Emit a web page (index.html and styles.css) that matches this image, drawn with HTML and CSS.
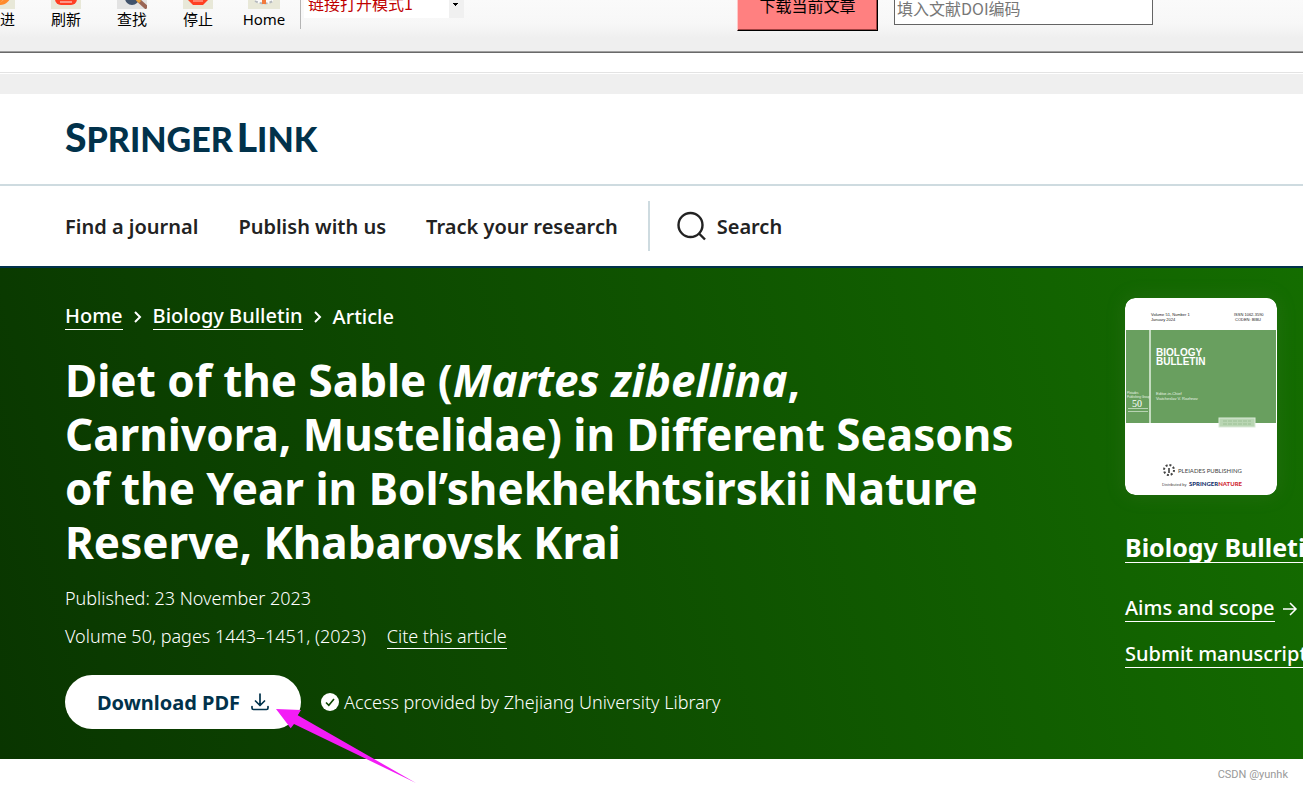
FILE: index.html
```html
<!DOCTYPE html>
<html lang="en">
<head>
    <meta charset="UTF-8">
    <meta name="viewport" content="width=device-width, initial-scale=1.0">
    <title>Diet of the Sable | Biology Bulletin</title>
    <link rel="stylesheet" href="styles.css">
</head>
<body>
    <div class="toolbar" lang="zh-CN">
        <div class="tools">
            <button class="tool">
                <svg width="30" height="30" viewBox="0 0 30 30"><rect width="30" height="30" fill="#e8e8d8"/><circle cx="15" cy="15" r="11" fill="#ff8a2b"/><path d="M9 15h10l-4-5 9 7-9 7 4-5H9z" fill="#ffa85c"/></svg>
                <span>前进</span>
            </button>
            <button class="tool">
                <svg width="30" height="30" viewBox="0 0 30 30"><rect width="30" height="30" fill="#e8e8d8"/><rect x="4" y="4" width="22" height="22" rx="6" fill="#ff3f22"/><path d="M10 20a5 5 0 1 1 10 0M9 23h12" fill="none" stroke="#ffb4a6" stroke-width="1.500"/></svg>
                <span>刷新</span>
            </button>
            <button class="tool">
                <svg width="30" height="30" viewBox="0 0 30 30"><rect width="30" height="30" fill="#e3e3e3"/><circle cx="15" cy="19" r="7" fill="#40526b"/><circle cx="14" cy="17" r="4" fill="#86b4da"/><path d="M20 20l10 9" stroke="#9a6555" stroke-width="4"/><path d="M19 19l4 4" stroke="#e8a33c" stroke-width="3"/></svg>
                <span>查找</span>
            </button>
            <button class="tool">
                <svg width="30" height="30" viewBox="0 0 30 30"><rect width="30" height="30" fill="#e8e8d8"/><path d="M10 4h10l6 6v10l-6 6H10l-6-6V10z" fill="#ff4022"/><path d="M10 22h10" stroke="#ffc2b5"/></svg>
                <span>停止</span>
            </button>
            <button class="tool">
                <svg width="32" height="30" viewBox="0 0 32 30"><rect width="32" height="30" fill="#e8e8d8"/><path d="M7 12h18v11q-9 4-18 0z" fill="#fafafa"/><path d="M7 22q9 5 18 0" fill="none" stroke="#b5b9bd" stroke-width="2" stroke-dasharray="3 2"/><path d="M14 17h4v8h-4z" fill="#f27a3c"/></svg>
                <span>Home</span>
            </button>
        </div>
        <select class="mode" aria-label="链接打开模式">
            <option>链接打开模式1</option>
        </select>
        <button class="fetch">下载当前文章</button>
        <input class="doi" type="text" placeholder="填入文献DOI编码" aria-label="DOI">
    </div>
    <div class="tabstrip"></div>

    <header class="header">
        <a class="logo" href="#"><b>S</b>PRINGER<b class="word">L</b>INK</a>
    </header>
    <nav class="nav">
        <a href="#">Find a journal</a>
        <a href="#">Publish with us</a>
        <a href="#">Track your research</a>
        <a class="search" href="#">
            <svg width="30" height="30" viewBox="0 0 30 30" fill="none" stroke="#222" stroke-width="2.400"><circle cx="13.500" cy="14" r="12"/><path d="M22 22.500l6 6"/></svg>
            Search
        </a>
    </nav>

    <main class="hero">
        <article class="article">
            <div class="crumbs">
                <a href="#">Home</a>
                <svg width="10" height="14" viewBox="0 0 10 14" fill="none" stroke="#fff" stroke-width="2"><path d="M2 2l5 5-5 5"/></svg>
                <a href="#">Biology Bulletin</a>
                <svg width="10" height="14" viewBox="0 0 10 14" fill="none" stroke="#fff" stroke-width="2"><path d="M2 2l5 5-5 5"/></svg>
                <span>Article</span>
            </div>
            <h1>Diet of the Sable (<i>Martes zibellina</i>,<br>Carnivora, Mustelidae) in Different Seasons<br>of the Year in Bol’shekhekhtsirskii Nature<br>Reserve, Khabarovsk Krai</h1>
            <p>Published: 23 November 2023</p>
            <p>Volume 50, pages 1443–1451, (2023) <a class="cite" href="#">Cite this article</a></p>
            <div class="actions">
                <a class="download" href="#">
                    Download PDF
                    <svg width="18" height="18" viewBox="0 0 18 18" fill="none" stroke="#01324b" stroke-width="1.700" stroke-linecap="round" stroke-linejoin="round"><path d="M9 1v11M4.500 8L9 12.500 13.500 8M1 13.500V15q0 1.500 1.500 1.500h13q1.500 0 1.500-1.500v-1.500"/></svg>
                </a>
                <svg class="pointer" width="140" height="74" viewBox="0 0 140 74"><path d="M0 0l25 1-3.300 5.300L140 74 18 15l-3.300 4.300z" fill="#f31cf6"/></svg>
                <span class="access">
                    <svg width="18" height="18" viewBox="0 0 18 18"><circle cx="9" cy="9" r="9" fill="#fff"/><path d="M5 9.500l2.800 2.800L13 6" fill="none" stroke="#0d4500" stroke-width="1.600"/></svg>
                    Access provided by Zhejiang University Library
                </span>
            </div>
        </article>
        <aside class="journal">
            <svg class="cover" width="152" height="197" viewBox="0 0 152 197">
                <rect width="152" height="197" rx="10" fill="#fff"/>
                <path d="M1 32h150v93H1z" fill="#699f5f"/>
                <path d="M25 32v93" stroke="#e4f0e1" stroke-width="1.500"/>
                <g class="cover-small" fill="#222"><text x="26" y="18">Volume 51, Number 1</text><text x="26" y="23">January 2024</text><text x="109" y="18">ISSN 1062-3590</text><text x="110" y="23">CODEN: BIBU</text></g>
                <g class="cover-title" fill="#fff"><text x="31" y="58">BIOLOGY</text><text x="31" y="67">BULLETIN</text></g>
                <g class="cover-small" fill="#e8f3e6"><text x="31" y="97">Editor-in-Chief</text><text x="31" y="102">Viatcheslav V. Rozhnov</text></g>
                <g class="cover-tiny" fill="#e8f3e6"><text x="2" y="96">Pleiades</text><text x="2" y="100">Publishing Group</text></g>
                <text class="cover-fifty" x="7" y="109" fill="#fff">50</text>
                <path d="M3 110.500h20M3 113.500h20" stroke="#b8d3b3"/>
                <rect x="94" y="120" width="36" height="9" fill="#b9d6b3" stroke="#dcebd9"/>
                <path d="M98 123h28M98 126h28" stroke="#9cc095" stroke-dasharray="4 1"/>
                <circle cx="44" cy="172" r="5" fill="none" stroke="#444" stroke-width="2" stroke-dasharray="2 1.900"/>
                <path d="M43 170h2v5h-2z" fill="#666"/>
                <text class="cover-brand" x="53" y="175" fill="#444">PLEIADES PUBLISHING</text>
                <text class="cover-small" x="37" y="188" fill="#444">Distributed by</text>
                <text class="cover-springer" x="64" y="188" fill="#16336e">SPRINGER<tspan fill="#d12a34">NATURE</tspan></text>
            </svg>
            <h2><a href="#">Biology Bulletin</a></h2>
            <div class="journal-link">
                <a href="#">Aims and scope</a>
                <svg width="16" height="16" viewBox="0 0 16 16" fill="none" stroke="#fff" stroke-width="1.500"><path d="M1 8h13M8 2l6 6-6 6"/></svg>
            </div>
            <div class="journal-link"><a href="#">Submit manuscript</a></div>
        </aside>
    </main>
    <footer class="watermark">CSDN @yunhk</footer>
</body>
</html>
```
FILE: styles.css
```css
* {
    box-sizing: border-box;
}

body {
    margin: 0;
    background: #fff;
    color: #222;
    font-family: "Noto Sans", "Noto Sans CJK SC", sans-serif;
    overflow-x: hidden;
}

a {
    color: inherit;
    text-decoration: none;
}

svg {
    flex-shrink: 0;
}

/* browser toolbar */
.toolbar {
    display: flex;
    align-items: flex-end;
    height: 53px;
    padding-bottom: 20px;
    overflow: hidden;
    background: linear-gradient(#fafafa, #f7f7f7 24px, #efefef 38px);
    border-bottom: 1px solid #696969;
    box-shadow: inset 0 -1px #a0a0a0;
}

.tools {
    display: flex;
    align-items: flex-end;
    margin-left: -33px;
    padding-right: 3px;
    margin-bottom: 3px;
    border-right: 1px solid #b4b4b4;
}

.tool {
    display: flex;
    flex-direction: column;
    align-items: center;
    width: 66px;
    padding: 0;
    border: 0;
    background: none;
    font: 15px/20px "Noto Sans", "Noto Sans CJK SC", sans-serif;
    color: #000;
}

.mode {
    appearance: none;
    width: 160px;
    height: 30px;
    margin: 0 0 14px 3px;
    padding: 0 4px;
    border: 0;
    border-radius: 0;
    background:
        linear-gradient(#000, #000) right 6px bottom 14px / 5px 1px no-repeat,
        linear-gradient(#000, #000) right 7px bottom 13px / 3px 1px no-repeat,
        linear-gradient(#000, #000) right 8px bottom 12px / 1px 1px no-repeat,
        linear-gradient(#f0f0f0, #f0f0f0) right / 15px 100% no-repeat,
        #fff;
    color: #c00000;
    font: 16px/30px "Noto Sans CJK SC", sans-serif;
}

.fetch {
    width: 141px;
    height: 48px;
    margin-left: 273px;
    margin-bottom: 1px;
    padding: 0 0 4px;
    border: 1px solid #000;
    border-left-color: #ffc8c8;
    background: #ff8080;
    box-shadow: inset -1px -1px #a04040;
    color: #000;
    font: 16px/24px "Noto Sans CJK SC", sans-serif;
    white-space: nowrap;
}

.doi {
    width: 259px;
    height: 34px;
    margin-left: 16px;
    margin-bottom: 7px;
    padding: 0 2px;
    border: 1px solid #646464;
    font: 16px/30px "Noto Sans CJK SC", sans-serif;
}

.doi::placeholder {
    color: #777;
}

.tabstrip {
    height: 41px;
    border-top: 19px solid #fff;
    background: linear-gradient(#e3e3e3 1px, #fff 1px, #fff 2px, #efefef 2px);
}

/* site header */
.header {
    padding: 20px 65px;
    border-bottom: 2px solid #cedbe0;
}

.logo {
    display: block;
    color: #01324b;
    font: 900 34px/50px Lato, sans-serif;
}

.logo b {
    font-size: 39px;
    font-weight: 900;
    line-height: 1;
}

.logo .word {
    margin-left: 4px;
}

.nav {
    display: flex;
    align-items: center;
    gap: 40px;
    height: 82px;
    padding: 0 65px;
    border-bottom: 2px solid #01324b;
    font-size: 20px;
    font-weight: 600;
}

.search {
    display: flex;
    align-items: center;
    gap: 10px;
    height: 50px;
    margin-left: -10px;
    padding-left: 27px;
    border-left: 2px solid #cedbe0;
}

/* article banner */
.hero {
    display: flex;
    justify-content: space-between;
    padding: 30px 0 30px 65px;
    overflow-x: clip;
    background: linear-gradient(75deg, #093500, #146d00);
    color: #fff;
}

.crumbs {
    display: flex;
    align-items: center;
    gap: 10px;
    font-size: 20px;
    font-weight: 500;
    line-height: 26px;
    padding: 5px 0;
}

.crumbs a,
.cite,
.journal a {
    border-bottom: 1px solid #fff;
}

h1 {
    margin: 18px 0 16px;
    font-size: 44px;
    font-weight: 700;
    line-height: 54px;
    white-space: nowrap;
}

p {
    margin: 0 0 12px;
    font-size: 18px;
    font-weight: 350;
    line-height: 26px;
}

.cite {
    margin-left: 16px;
}

.actions {
    display: flex;
    align-items: center;
    gap: 20px;
    position: relative;
    margin-top: 26px;
}

.download {
    display: flex;
    align-items: center;
    justify-content: center;
    gap: 11px;
    width: 236px;
    height: 54px;
    border-radius: 27px;
    background: #fff;
    color: #01324b;
    font-size: 20px;
    font-weight: 700;
}

.pointer {
    position: absolute;
    left: 211px;
    top: 34px;
}

.access {
    display: flex;
    align-items: center;
    gap: 5px;
    font-size: 18px;
    font-weight: 350;
}

.journal {
    flex: 0 0 178px;
    min-width: 0;
    white-space: nowrap;
}

.cover {
    display: block;
    border-radius: 10px;
    box-shadow: 0 0 20px rgba(100, 130, 80, 0.2);
}

.cover-small {
    font: 4px "Liberation Sans", sans-serif;
}

.cover-tiny {
    font: 3px "Liberation Sans", sans-serif;
}

.cover-title {
    font: bold 10px "Liberation Sans", sans-serif;
}

.cover-fifty {
    font: 10px "Liberation Serif", serif;
}

.cover-brand {
    font: 6px Lato, sans-serif;
}

.cover-springer {
    font: 900 6px Lato, sans-serif;
}

h2 {
    margin: 36px 0 32px;
    font-size: 25px;
    line-height: 32px;
}

h2 a {
    display: inline-block;
    line-height: 30px;
}

.journal-link {
    display: flex;
    align-items: center;
    gap: 7px;
    margin-bottom: 19px;
    font-size: 20px;
    font-weight: 500;
    line-height: 26px;
}

.watermark {
    padding: 9px 15px;
    color: #999;
    font: 11px/14px Roboto, sans-serif;
    text-align: right;
}
```
